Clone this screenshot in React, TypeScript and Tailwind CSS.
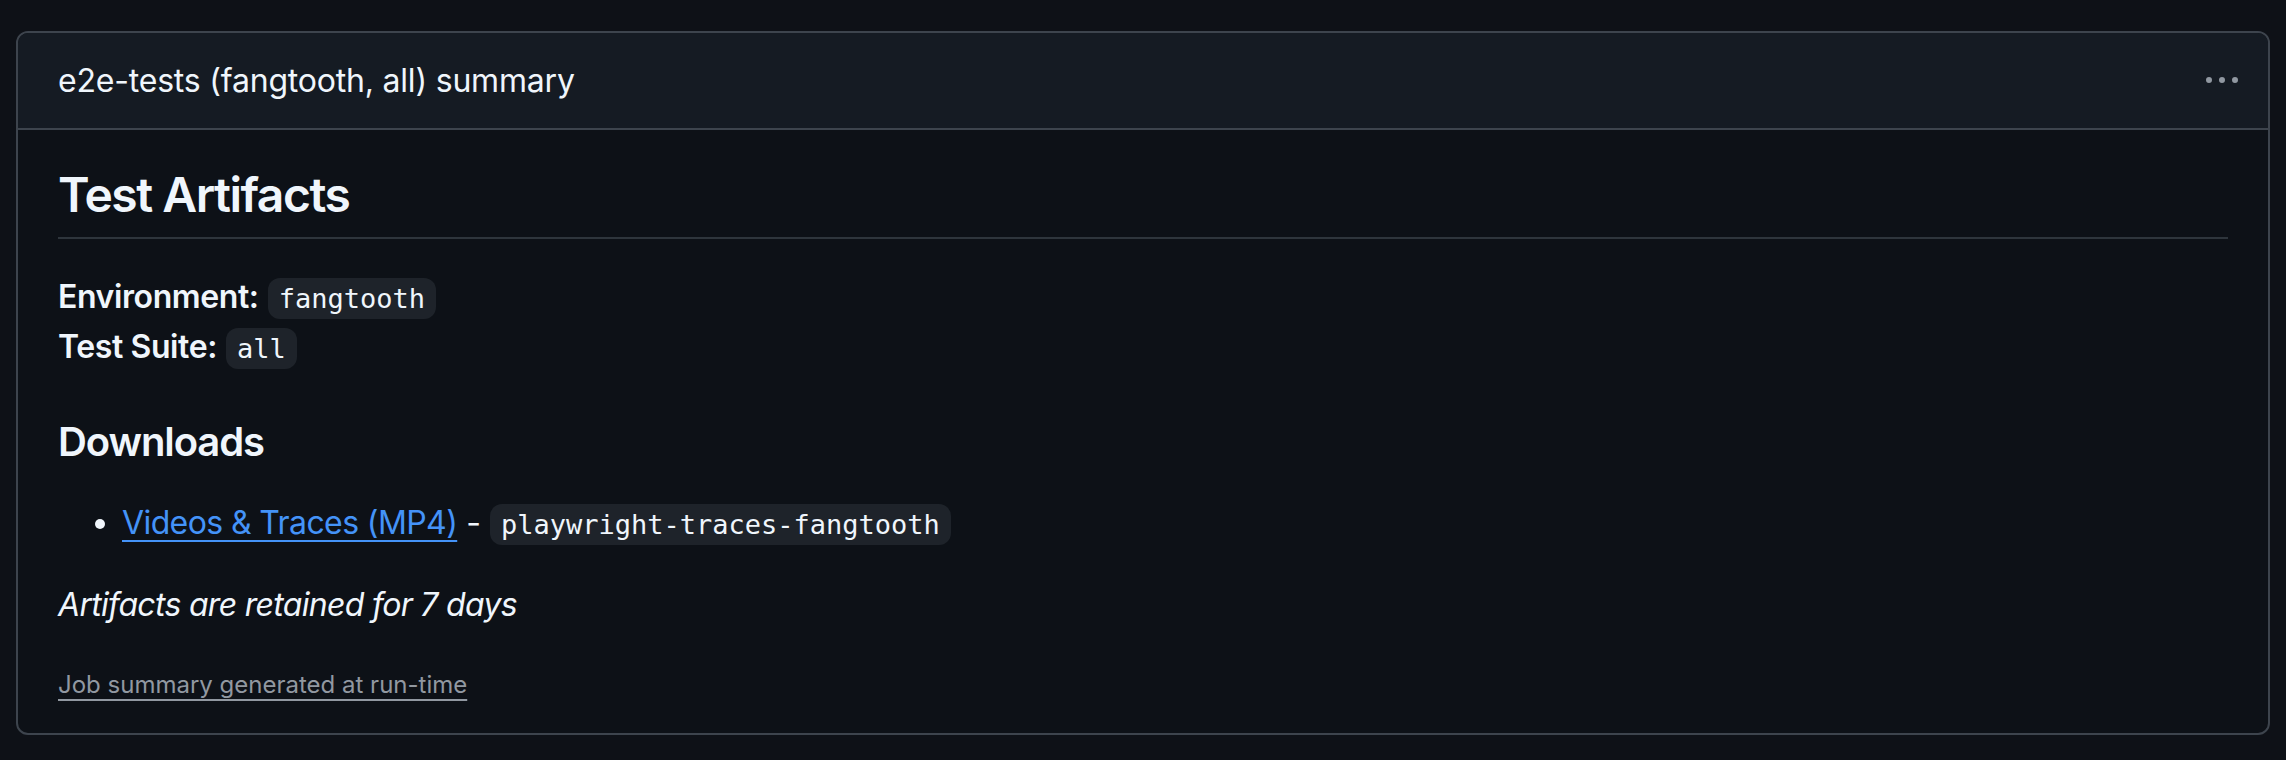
import React from 'react'

// Job summary card for the e2e test run
const mono = "font-['DejaVu_Sans_Mono',monospace]"

function Code({ children }: { children: React.ReactNode }) {
  return (
    <code className={`${mono} text-[27px] tracking-normal px-[11px] py-[5px] rounded-[12px] bg-[#656c7633] text-[#f0f6fc]`}>
      {children}
    </code>
  )
}

function KebabIcon() {
  return (
    <svg width="32" height="32" viewBox="0 0 16 16" fill="#9198a1" aria-hidden="true">
      <path d="M8 9a1.5 1.5 0 1 0 0-3 1.5 1.5 0 0 0 0 3ZM1.5 9a1.5 1.5 0 1 0 0-3 1.5 1.5 0 0 0 0 3Zm13 0a1.5 1.5 0 1 0 0-3 1.5 1.5 0 0 0 0 3Z" />
    </svg>
  )
}

export default function App() {
  return (
    <div className="min-h-screen bg-[#0e1117] pt-[31px] px-[16px] pb-[25px] font-['Inter',sans-serif] text-[#f0f6fc]">
      <div className="rounded-[12px] border-2 border-[#3d444d] bg-[#0d1117] overflow-hidden">
        {/* Header */}
        <div className="flex items-center justify-between h-[97px] bg-[#151b23] border-b-2 border-[#3d444d] pl-[40px] pr-[30px]">
          <span className="text-[32px] leading-[44px] tracking-[-0.2px]">e2e-tests (fangtooth, all) summary</span>
          <KebabIcon />
        </div>

        {/* Body */}
        <div className="px-[40px] pt-[35px] pb-[30px]">
          <h2 className="text-[48px] leading-[60px] font-semibold tracking-[-1.5px] pb-[12px] border-b-2 border-[#3d444db3]">
            Test Artifacts
          </h2>

          <p className="mt-[34px] text-[32px] leading-[48px]">
            <strong className="font-semibold tracking-[-0.4px]">Environment:</strong> <Code>fangtooth</Code>
            <br />
            <strong className="font-semibold tracking-[-0.4px]">Test Suite:</strong> <Code>all</Code>
          </p>

          <h3 className="mt-[44px] text-[40px] leading-[50px] font-semibold tracking-[-1.1px]">Downloads</h3>

          <ul className="mt-[32px] list-disc pl-[64px] text-[32px] leading-[48px]">
            <li>
              <a
                href="#"
                className="text-[#4493f8] tracking-[-0.6px] underline decoration-2 underline-offset-[6px]"
              >
                Videos &amp; Traces (MP4)
              </a>{' '}
              - <Code>playwright-traces-fangtooth</Code>
            </li>
          </ul>

          <p className="mt-[32px] text-[32px] leading-[48px] italic tracking-[-0.7px]">
            Artifacts are retained for 7 days
          </p>

          <div className="mt-[38px] text-[24px] leading-[36px]">
            <a href="#" className="text-[#9198a1] underline decoration-[#9198a1] underline-offset-[6px]">
              Job summary generated at run-time
            </a>
          </div>
        </div>
      </div>
    </div>
  )
}
